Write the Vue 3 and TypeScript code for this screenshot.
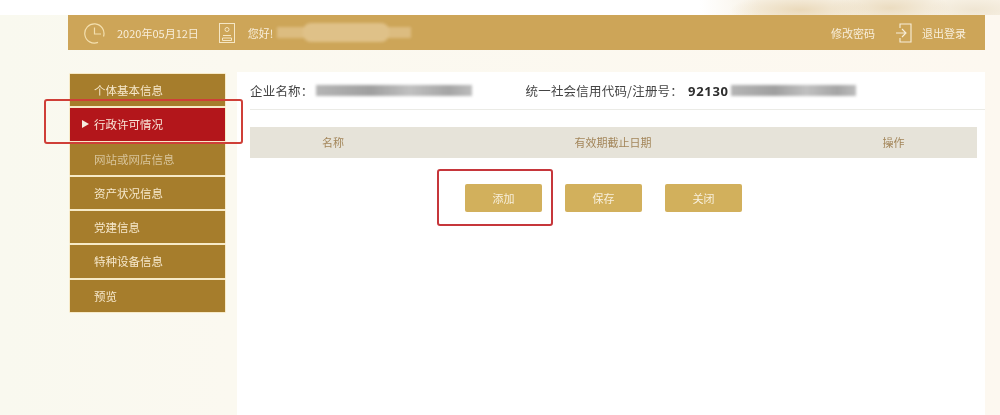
<template>
  <div class="page">
    <div class="top-strip"></div>

    <header class="top-bar">
      <div class="bar-left">
        <svg class="icon-clock" width="22" height="22" viewBox="0 0 22 22" fill="none" stroke="currentColor" stroke-width="1.2">
          <path d="M19.5 14.5A9.6 9.6 0 1 0 14 20.4" />
          <path d="M10.5 5.5V12H17" />
        </svg>
        <span class="date">2020年05月12日</span>
        <svg class="icon-user" width="16" height="20" viewBox="0 0 16 20" fill="none" stroke="currentColor" stroke-width="1">
          <rect x="0.5" y="0.5" width="15" height="19" />
          <circle cx="8" cy="6.5" r="2" />
          <path d="M4 12.5h8M3.5 15h9v2.5h-9z" />
        </svg>
        <span class="hello">您好!</span>
        <span class="user-mask"></span>
      </div>
      <div class="bar-right">
        <span class="bar-link">修改密码</span>
        <svg class="icon-exit" width="16" height="20" viewBox="0 0 16 20" fill="none" stroke="currentColor" stroke-width="1.1">
          <path d="M4 5V1h11v18H4v-4" />
          <path d="M0 10h9M6 6l4 4-4 4" />
        </svg>
        <span class="bar-link">退出登录</span>
      </div>
    </header>

    <main class="main">
      <nav class="side-nav">
        <div
          v-for="item in navItems"
          :key="item.label"
          class="nav-item"
          :class="{ active: item.active, dim: item.dim }"
        >
          <span v-if="item.active" class="nav-arrow"></span>
          {{ item.label }}
        </div>
        <div class="mark mark-nav"></div>
      </nav>

      <section class="content">
        <div class="info-row">
          <span class="info-label">企业名称：</span>
          <span class="mask mask-name"></span>
          <span class="info-label code-label">统一社会信用代码/注册号：</span>
          <b class="code">92130</b>
          <span class="mask mask-code"></span>
        </div>

        <div class="table-head">
          <div class="col col-name">名称</div>
          <div class="col col-date">有效期截止日期</div>
          <div class="col col-op">操作</div>
        </div>

        <div class="actions">
          <div class="add-wrap">
            <button class="btn">添加</button>
            <div class="mark mark-add"></div>
          </div>
          <button class="btn">保存</button>
          <button class="btn">关闭</button>
        </div>
      </section>
    </main>
  </div>
</template>

<script setup lang="ts">
interface NavItem {
  label: string
  active?: boolean
  dim?: boolean
}

const navItems: NavItem[] = [
  { label: '个体基本信息' },
  { label: '行政许可情况', active: true },
  { label: '网站或网店信息', dim: true },
  { label: '资产状况信息' },
  { label: '党建信息' },
  { label: '特种设备信息' },
  { label: '预览' }
]
</script>

<style>
html,
body {
  margin: 0;
  background: #fbf8f0;
}
</style>

<style scoped>
.page {
  width: 1000px;
  height: 415px;
  overflow: hidden;
  background: linear-gradient(90deg, #f9f9ef 0, #fbf9f0 230px, #fdf8f0 1000px);
  font-family: "Noto Sans CJK SC", "Liberation Sans", sans-serif;
  font-size: 11px;
}

.top-strip {
  height: 15px;
  background:
    radial-gradient(ellipse 70px 16px at 800px 10px, #ead9ba, transparent),
    radial-gradient(ellipse 60px 18px at 890px 8px, #ebdcc0, transparent),
    radial-gradient(ellipse 50px 14px at 975px 10px, #efe5d2, transparent),
    linear-gradient(90deg, #ffffff 700px, #f8f2e6 760px);
}

.top-bar {
  width: 917px;
  height: 35px;
  margin-left: 68px;
  display: flex;
  justify-content: space-between;
  align-items: center;
  background: #cda558;
  color: #f8eeda;
}

.bar-left,
.bar-right {
  display: flex;
  align-items: center;
}

.icon-clock {
  margin-left: 16px;
  color: #f3dfae;
  filter: blur(0.3px);
}

.date {
  margin-left: 11px;
  filter: blur(0.6px);
}

.icon-user {
  margin-left: 20px;
  color: #f5e6c4;
  filter: blur(0.4px);
}

.hello {
  margin-left: 13px;
  filter: blur(0.6px);
}

.user-mask {
  position: relative;
  width: 134px;
  height: 11px;
  margin-left: 4px;
  background: #dcbc80;
  filter: blur(1.5px);
}

.user-mask::after {
  content: "";
  position: absolute;
  left: 26px;
  top: -4px;
  width: 86px;
  height: 19px;
  border-radius: 8px;
  background: #dfc188;
}

.bar-right {
  padding-right: 19px;
}

.bar-link {
  filter: blur(0.7px);
}

.icon-exit {
  margin: 0 10px 0 21px;
  color: #f8eeda;
  filter: blur(0.3px);
}

.main {
  display: flex;
  margin-top: 22px;
  margin-left: 70px;
}

.side-nav {
  position: relative;
  width: 155px;
  flex-shrink: 0;
  margin-top: 2px;
  display: flex;
  flex-direction: column;
  gap: 2px;
}

.nav-item {
  position: relative;
  height: 32.3px;
  line-height: 32px;
  padding-left: 24px;
  background: #a67d2c;
  color: #f6e8cc;
  font-size: 11.5px;
  box-shadow: 0 0 0 0.5px #f3dc9f;
  filter: blur(0.5px);
}

.nav-item.active {
  background: #b3161b;
  color: #f9e6d8;
}

.nav-item.dim {
  color: #d8c49a;
}

.nav-arrow {
  position: absolute;
  left: 12px;
  top: 12px;
  border-left: 7px solid #f6ece0;
  border-top: 4px solid transparent;
  border-bottom: 4px solid transparent;
}

.mark {
  position: absolute;
  box-sizing: border-box;
  border: 2.5px solid #cf3f38;
  border-radius: 3px;
  pointer-events: none;
  filter: blur(0.3px);
}

.mark-nav {
  left: -26px;
  top: 25px;
  width: 199px;
  height: 45px;
}

.content {
  width: 748px;
  height: 343px;
  margin-left: 12px;
  background: #ffffff;
}

.info-row {
  display: flex;
  align-items: center;
  height: 37px;
  margin: 0 0 0 13px;
  color: #444444;
  font-size: 12.5px;
  border-bottom: 1px solid #ebebe6;
  width: 735px;
}

.info-label {
  letter-spacing: 0.2px;
  filter: blur(0.3px);
}

.code-label {
  margin-left: 54px;
}

.code {
  margin-left: 5px;
  color: #2e2e2e;
  font-size: 13px;
  font-family: "Noto Sans", "Liberation Sans", sans-serif;
  letter-spacing: 0.7px;
  filter: blur(0.2px);
}

.mask {
  height: 11px;
  background: linear-gradient(90deg, #b5b5b5, #9f9f9f 35%, #c0c0c0 60%, #a5a5a5 85%, #bcbcbc);
  filter: blur(1.5px);
}

.mask-name {
  width: 156px;
  margin-left: 2px;
}

.mask-code {
  width: 125px;
  margin-left: 2px;
}

.table-head {
  display: flex;
  width: 727px;
  height: 31px;
  margin: 17px 0 0 13px;
  background: #e6e3d9;
  color: #a3865a;
  line-height: 31px;
  text-align: center;
  filter: blur(0.5px);
}

.col-name {
  width: 166px;
}

.col-date {
  width: 394px;
}

.col-op {
  width: 167px;
}

.actions {
  display: flex;
  gap: 23px;
  margin: 26px 0 0 228px;
}

.add-wrap {
  position: relative;
  display: flex;
}

.btn {
  width: 77px;
  height: 28px;
  padding: 0;
  border: none;
  border-radius: 2px;
  background: #d2b05c;
  color: #f8f0dd;
  font-family: inherit;
  font-size: 11px;
  filter: blur(0.5px);
}

.mark-add {
  left: -28px;
  top: -15px;
  width: 116px;
  height: 57px;
  border-color: #c6363b;
}
</style>
